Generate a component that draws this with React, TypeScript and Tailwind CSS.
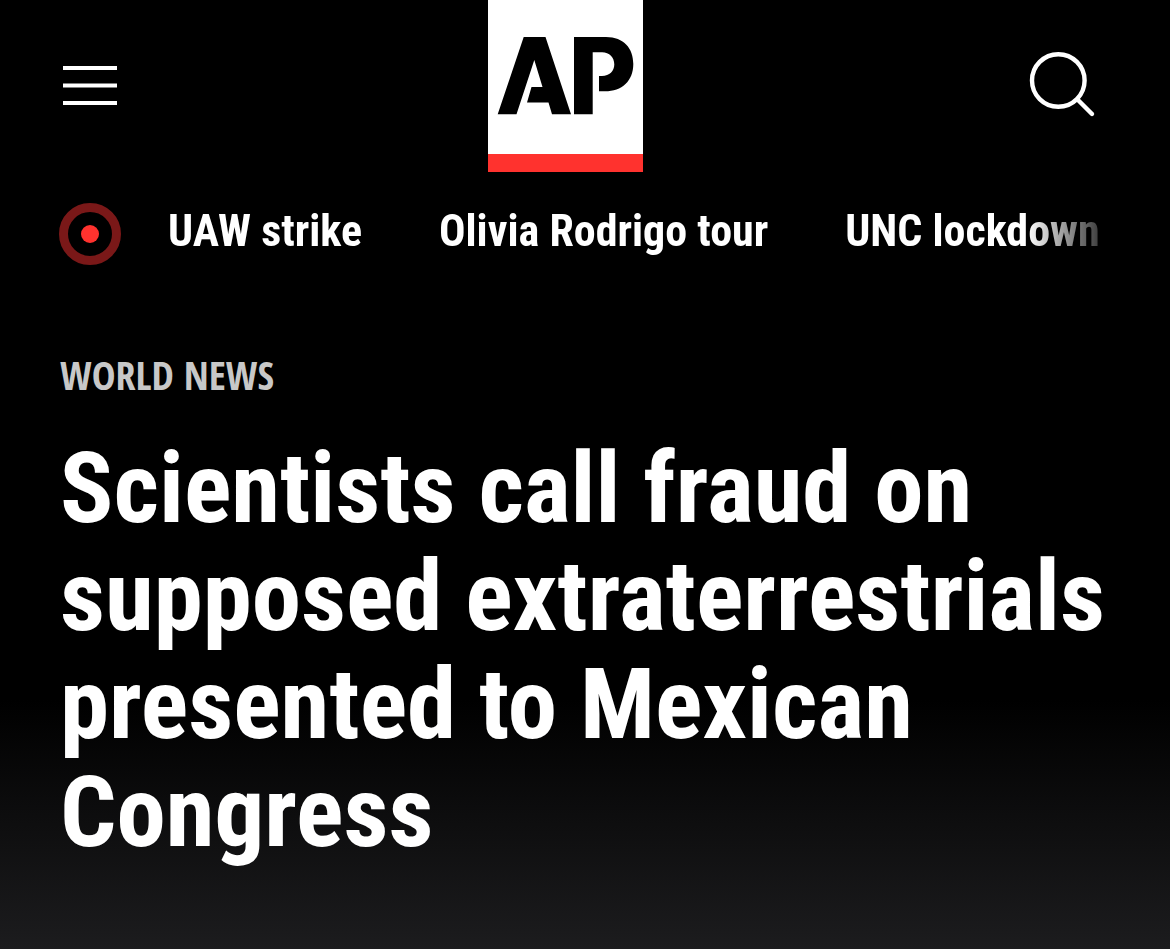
const trends = ['UAW strike', 'Olivia Rodrigo tour', 'UNC lockdown'];

function MenuIcon() {
  return (
    <svg className="block h-10 w-[54px]" viewBox="0 0 54 40" stroke="#fff" strokeWidth="4" aria-hidden="true">
      <path d="M0 2h54M0 19.5h54M0 37h54" />
    </svg>
  );
}

function SearchIcon() {
  return (
    <svg
      className="block size-[72px]"
      viewBox="0 0 72 72"
      fill="none"
      stroke="#fff"
      strokeWidth="4.4"
      strokeLinecap="round"
      aria-hidden="true"
    >
      <circle cx="32.3" cy="30.5" r="26.3" />
      <path d="M51.5 49.5l14.5 14.5" />
    </svg>
  );
}

function Logo() {
  return (
    <svg className="block h-[172px] w-[155px]" viewBox="0 0 155 172" aria-hidden="true">
      <rect width="155" height="172" fill="#fff" />
      <rect y="154" width="155" height="18" fill="#ff322e" />
      <path d="M35.7 37H57.5L83 114.3H64L60.5 102.5H39L43.5 87H54.5L46.3 60L28.5 114.3H9.7Z" />
      <path d="M86 37H118C136 37 145.3 48.5 145.3 64C145.3 81 134 91.3 117 91.3H111V76H114C121.5 76 126.3 71 126.3 64.5C126.3 57.5 121.5 52.3 114 52.3H104.7V114.3H86Z" />
    </svg>
  );
}

function LiveIcon() {
  return (
    <svg className="block size-[62px] shrink-0" viewBox="0 0 62 62" role="img" aria-label="Live">
      <circle cx="31" cy="31" r="26.5" fill="none" stroke="#7a1818" strokeWidth="9" />
      <circle cx="31" cy="31" r="9" fill="#ff322e" />
    </svg>
  );
}

export default function App() {
  return (
    <div className="min-h-screen bg-[linear-gradient(to_bottom,#000_700px,#1c1c1e_949px)] font-['Roboto_Condensed','Roboto',sans-serif] text-white">
      <header className="flex items-center justify-between pr-[72px] pl-[63px]">
        <button type="button" aria-label="Menu">
          <MenuIcon />
        </button>
        <a href="#home" aria-label="AP home">
          <Logo />
        </a>
        <button type="button" aria-label="Search" className="pl-3">
          <SearchIcon />
        </button>
      </header>

      <nav aria-label="Trending" className="mt-[31px] flex items-start gap-[47px] pr-[48px] pl-[59px]">
        <LiveIcon />
        <ul className="flex min-w-0 flex-1 gap-[77px] overflow-hidden text-[44px] leading-[56px] font-bold whitespace-nowrap [mask-image:linear-gradient(to_right,#000_calc(100%-95px),transparent)]">
          {trends.map((trend) => (
            <li key={trend}>
              <a href="#trend">{trend}</a>
            </li>
          ))}
        </ul>
      </nav>

      <main className="px-[60px] pt-[82px] pb-20">
        <a
          href="#world-news"
          className="block font-['Open_Sans_Condensed','Roboto_Condensed',sans-serif] text-[40px] leading-[56px] font-normal text-[#c8c8c8] uppercase"
        >
          World News
        </a>
        <h1 className="mt-[31px] text-[99px] leading-[108px] font-bold">
          Scientists call fraud on supposed extraterrestrials presented to Mexican Congress
        </h1>
      </main>
    </div>
  );
}
